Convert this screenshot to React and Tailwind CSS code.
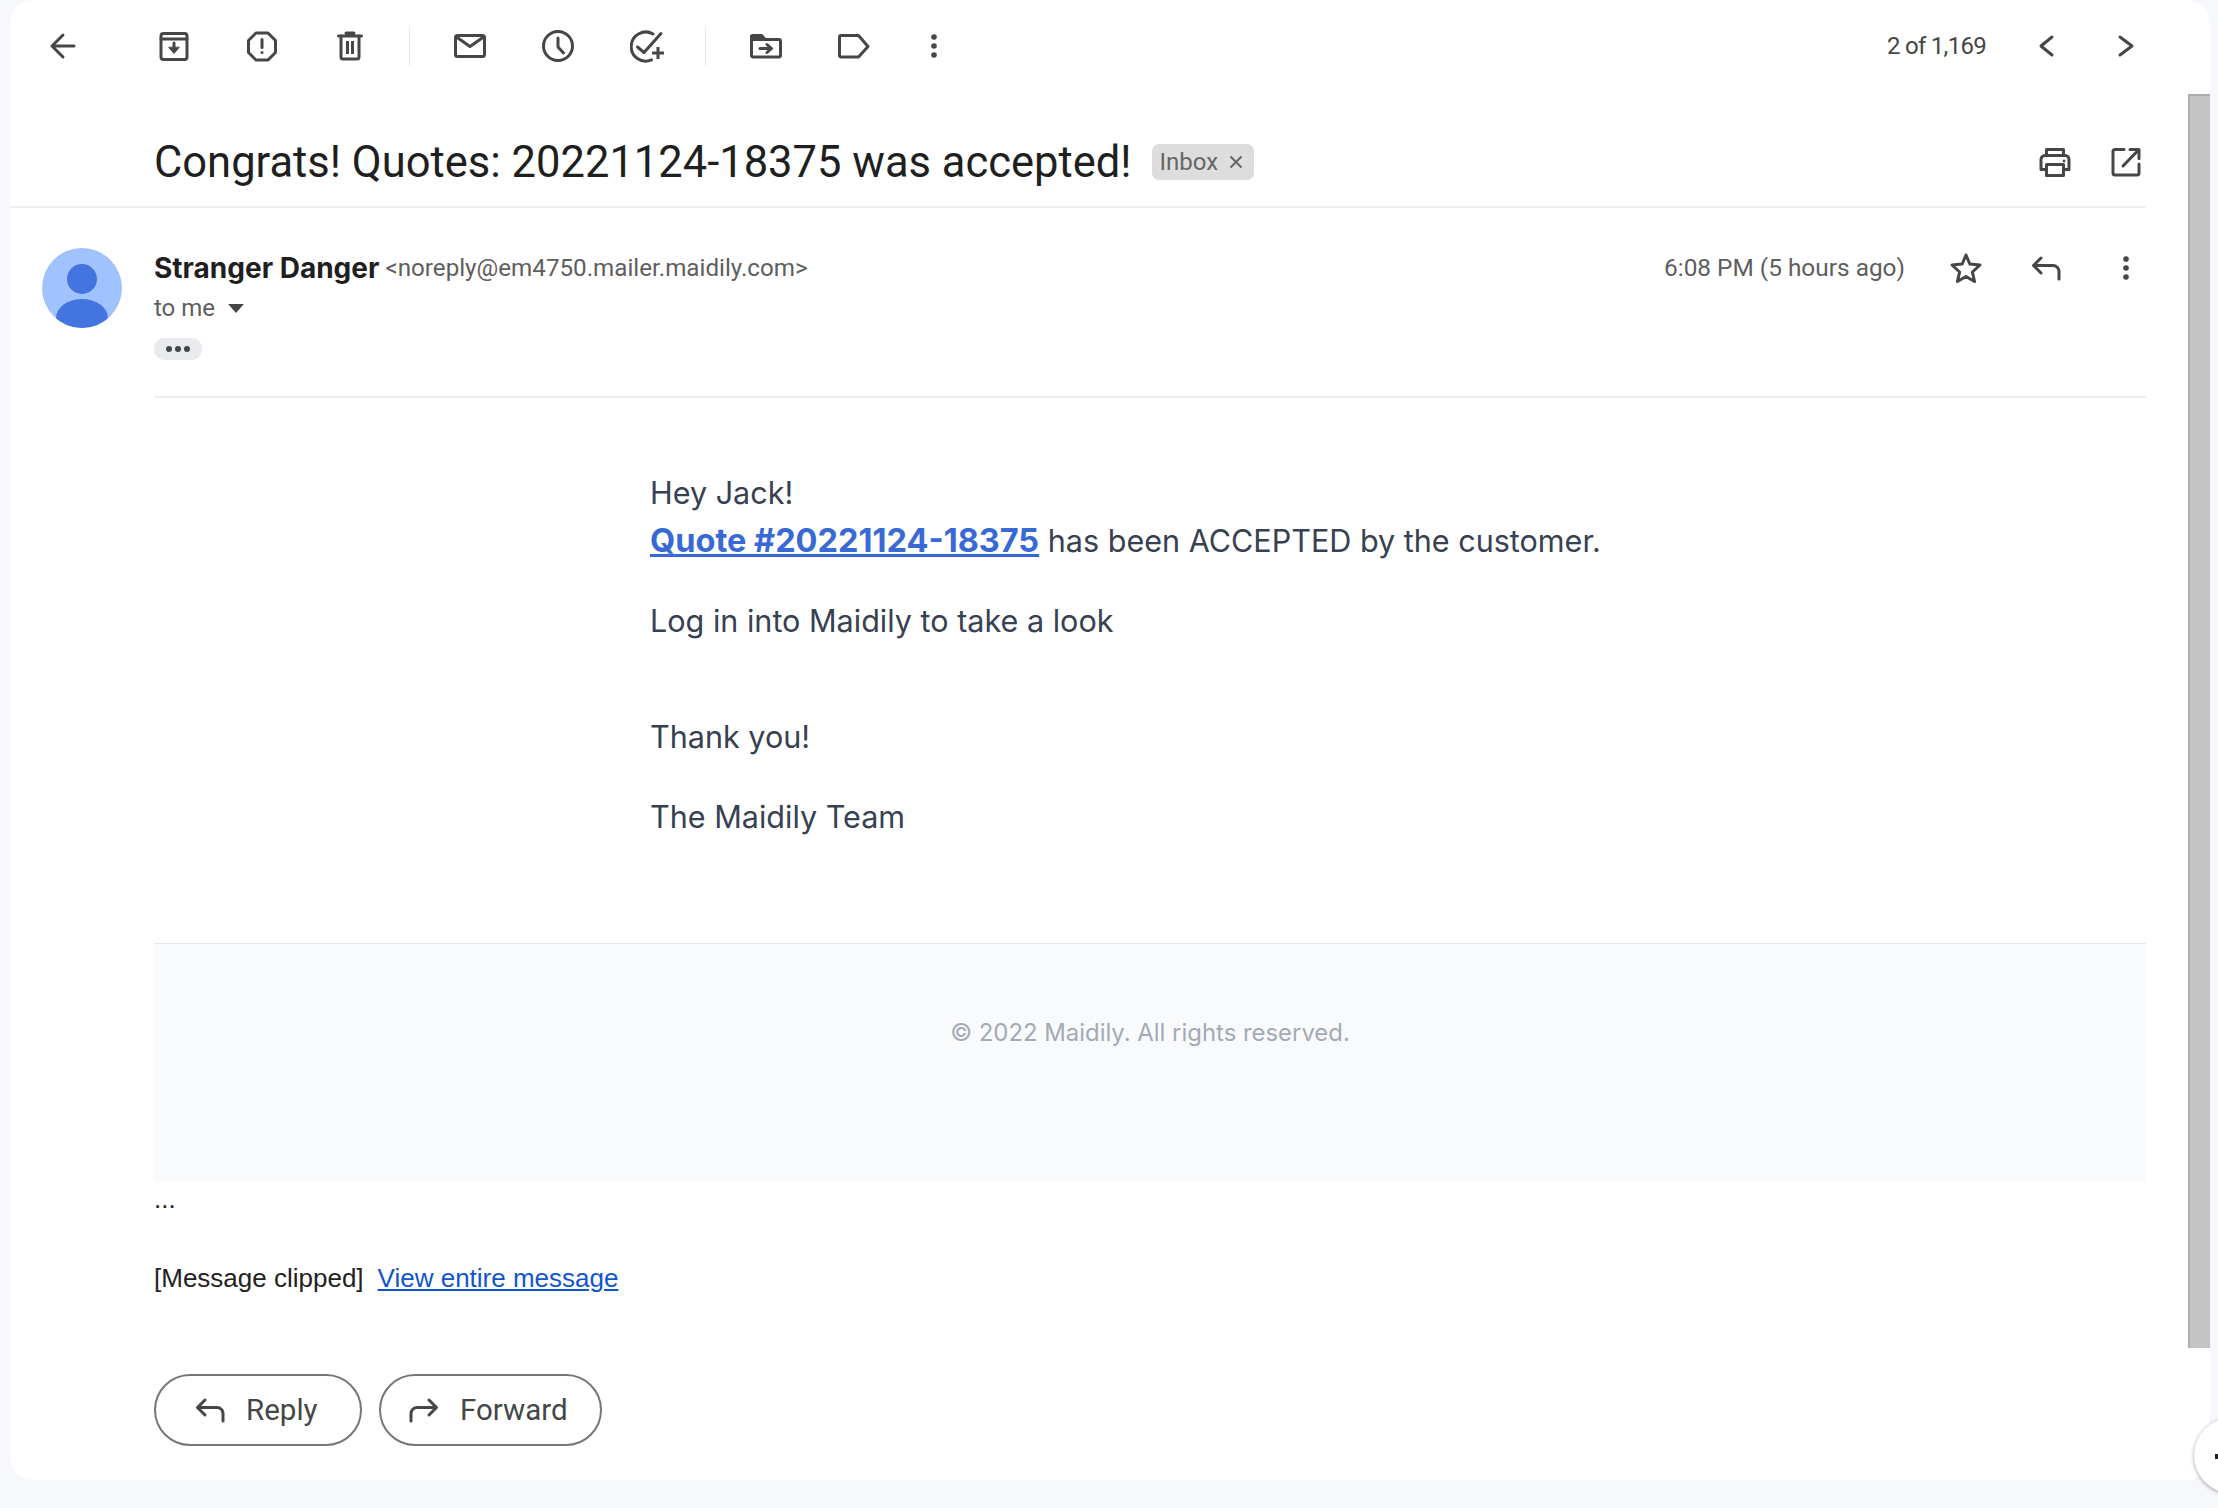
import React from 'react';

const Ico = ({ children, fill = 'none', className = '' }) => (
  <svg
    viewBox="0 0 34 34"
    fill={fill}
    stroke="#444746"
    strokeWidth="3"
    strokeLinecap="round"
    strokeLinejoin="round"
    className={`w-[34px] h-[34px] shrink-0 ${className}`}
  >
    {children}
  </svg>
);

const BackIcon = () => <Ico><path d="M6 17H28M17 6L6 17L17 28" /></Ico>;
const ArchiveIcon = () => (
  <Ico>
    <rect x="4" y="4.5" width="26" height="26" rx="2.5" />
    <path d="M4 10H30" />
    <path d="M17 14V21" />
    <path d="M12 18.5L17 24.5L22 18.5Z" fill="#444746" strokeWidth="1" />
  </Ico>
);
const ReportIcon = () => (
  <Ico>
    <path d="M11 4H23L30.5 11.5V23.5L23 31H11L3.5 23.5V11.5Z" />
    <path d="M17 10.5V18.5M17 23.5V23.6" />
  </Ico>
);
const TrashIcon = () => (
  <Ico>
    <path d="M5.5 7H28.5M13 4H21" />
    <path d="M8 7V28a2 2 0 0 0 2 2H24a2 2 0 0 0 2-2V7" />
    <path d="M14.5 12V25M19.5 12V25" strokeLinecap="butt" />
  </Ico>
);
const MailIcon = () => (
  <Ico>
    <rect x="2.5" y="6.5" width="29" height="21" rx="2" />
    <path d="M3.5 8L17 17.5L30.5 8" />
  </Ico>
);
const ClockIcon = () => (
  <Ico>
    <circle cx="17" cy="17" r="14.5" />
    <path d="M17 9V18L22.5 24" />
  </Ico>
);
const AddTaskIcon = ({ className }) => (
  <Ico className={className}>
    <path d="M23 5A14.5 14.5 0 1 0 21.5 30.8" />
    <path d="M7.5 18L14 23.5L31 4.5" />
    <path d="M28 18V30M22 24H34" strokeLinecap="butt" />
  </Ico>
);
const FolderMoveIcon = () => (
  <Ico>
    <path d="M2.5 7V26.5a1.5 1.5 0 0 0 1.5 1.5H30a1.5 1.5 0 0 0 1.5-1.5V12a1.5 1.5 0 0 0-1.5-1.5H16L12.5 6.5H3.5z" />
    <path d="M3 7H12L16 10.5H3Z" fill="#444746" />
    <path d="M11 19.5H22M18 15.5L22.5 19.5L18 23.5" />
  </Ico>
);
const LabelIcon = () => (
  <Ico>
    <path d="M4 6.5H21.5L31 17.5L21.5 28H4a1.5 1.5 0 0 1-1.5-1.5V8A1.5 1.5 0 0 1 4 6.5Z" />
  </Ico>
);
const MoreIcon = () => (
  <Ico fill="#444746">
    <circle cx="17" cy="8" r="2.8" stroke="none" />
    <circle cx="17" cy="17" r="2.8" stroke="none" />
    <circle cx="17" cy="26" r="2.8" stroke="none" />
  </Ico>
);
const ChevronLeft = () => <Ico><path d="M22 8L11 17L22 26" /></Ico>;
const ChevronRight = () => <Ico><path d="M11 8L23 17L11 26" /></Ico>;
const PrintIcon = () => (
  <Ico>
    <path d="M8.5 24.5H3V14.5a4 4 0 0 1 4-4H27a4 4 0 0 1 4 4V24.5H25.5" />
    <path d="M8.5 10.5V4.5H25.5V10.5" />
    <rect x="8.5" y="19.5" width="17" height="11" />
    <circle cx="26" cy="16" r="1.4" fill="#444746" stroke="none" />
  </Ico>
);
const OpenIcon = () => (
  <Ico>
    <path d="M15 4.5H6a2 2 0 0 0-2 2V28a2 2 0 0 0 2 2H28a2 2 0 0 0 2-2V19" />
    <path d="M21 4.5H30V13.5M29.5 5L14 21" />
  </Ico>
);
const StarIcon = () => (
  <Ico>
    <path d="M17 4L20.8 13L31 14L23.4 21L25.6 30.5L17 25.5L8.4 30.5L10.6 21L3 14L13.2 13Z" />
  </Ico>
);
const ReplyIcon = () => (
  <Ico><path d="M12 7L4.5 14.5L12 22M4.5 14.5H24a6 6 0 0 1 6 6V28" /></Ico>
);
const ForwardIcon = () => (
  <Ico><path d="M22 7L29.5 14.5L22 22M29.5 14.5H10a6 6 0 0 0-6 6V28" /></Ico>
);

const Avatar = () => (
  <svg viewBox="0 0 80 80" className="w-[80px] h-[80px] shrink-0">
    <defs>
      <clipPath id="avatar-clip">
        <circle cx="40" cy="40" r="40" />
      </clipPath>
    </defs>
    <g clipPath="url(#avatar-clip)">
      <rect width="80" height="80" fill="#a0c3ff" />
      <ellipse cx="40" cy="31" rx="15" ry="15" fill="#4374e0" />
      <ellipse cx="40" cy="70" rx="26" ry="19" fill="#4374e0" />
    </g>
  </svg>
);

export default function App() {
  return (
    <div className="relative w-[2218px] h-[1508px] overflow-hidden bg-[#f6f8fc] font-['Roboto',sans-serif]">
      <div className="ml-[10px] w-[2200px] h-[1480px] rounded-[24px] bg-white flex overflow-hidden">
        <div className="w-[2178px] flex flex-col">
          {/* toolbar */}
          <div className="h-[90px] flex items-center pt-[2px] pl-[36px] pr-[45px]">
            <BackIcon />
            <div className="ml-[77px] flex items-center gap-[54px]">
              <ArchiveIcon />
              <ReportIcon />
              <TrashIcon />
            </div>
            <div className="ml-[42px] w-[1px] h-[39px] bg-[#e3e6ea]" />
            <div className="ml-[43px] flex items-center gap-[54px]">
              <MailIcon />
              <ClockIcon />
              <AddTaskIcon className="ml-[1px]" />
            </div>
            <div className="ml-[41px] w-[1px] h-[39px] bg-[#e3e6ea]" />
            <div className="ml-[43px] flex items-center gap-[54px]">
              <FolderMoveIcon />
              <LabelIcon />
            </div>
            <div className="ml-[46px]"><MoreIcon /></div>
            <div className="ml-auto flex items-center">
              <span className="text-[24px] text-[#444746] tracking-[-0.7px]">2 of 1,169</span>
              <div className="ml-[44px] flex items-center gap-[45px]">
                <ChevronLeft />
                <ChevronRight />
              </div>
            </div>
          </div>

          {/* subject */}
          <div className="h-[118px] mr-[42px] pt-[28px] pl-[144px] pr-[3px] flex items-center border-b-2 border-[#ebeff3]">
            <h1 className="pt-[2px] text-[43.5px] leading-none font-normal text-[#1f1f1f]">Congrats! Quotes: 20221124-18375 was accepted!</h1>
            <span className="ml-[20px] h-[36px] w-[102px] rounded-[7px] bg-[#dddddd] flex items-center pl-[8px] text-[24px] text-[#666666]">
              Inbox
              <svg viewBox="0 0 14 14" stroke="#666666" strokeWidth="2" className="ml-[11px] w-[14px] h-[14px]">
                <path d="M1.5 1.5L12.5 12.5M12.5 1.5L1.5 12.5" />
              </svg>
            </span>
            <div className="ml-auto flex items-center gap-[37px]">
              <PrintIcon />
              <OpenIcon />
            </div>
          </div>

          {/* sender + message */}
          <div className="flex pl-[32px] pr-[42px] pt-[40px]">
            <Avatar />
            <div className="ml-[32px] flex-1 min-w-0">
              <div className="h-[150px] pt-[1px] border-b-2 border-[#ebeff3]">
                <div className="flex items-center h-[38px]">
                  <span className="font-['Inter',sans-serif] text-[28px] font-bold text-[#1f1f1f]">Stranger Danger</span>
                  <span className="ml-[6px] text-[24.2px] text-[#5e5e5e]">&lt;noreply@em4750.mailer.maidily.com&gt;</span>
                  <span className="ml-auto text-[24.4px] text-[#5e5e5e]">6:08 PM (5 hours ago)</span>
                  <div className="ml-[44px] mr-[3px] flex items-center gap-[46px]">
                    <StarIcon />
                    <ReplyIcon />
                    <MoreIcon />
                  </div>
                </div>
                <div className="mt-[2px] flex items-center h-[38px] text-[24px] text-[#5e5e5e]">
                  to me
                  <svg viewBox="0 0 14 8" className="ml-[13px] w-[16px] h-[9px]"><path d="M0 0H14L7 8Z" fill="#444746" /></svg>
                </div>
                <div className="mt-[11px] w-[48px] h-[22px] rounded-[10px] bg-[#e8eaed] flex items-center justify-center gap-[3px]">
                  <span className="w-[6px] h-[6px] rounded-full bg-[#444746]" />
                  <span className="w-[6px] h-[6px] rounded-full bg-[#444746]" />
                  <span className="w-[6px] h-[6px] rounded-full bg-[#444746]" />
                </div>
              </div>

              <div className="pt-[71px] pl-[496px] font-['Inter',sans-serif] text-[30.55px] leading-[48px] text-[#374151]">
                <p>Hey Jack!</p>
                <p>
                  <a className="font-bold text-[32.5px] text-[#3869d4] underline">Quote #20221124-18375</a> has been ACCEPTED by the customer.
                </p>
                <p className="mt-[32px]">Log in into Maidily to take a look</p>
                <p className="mt-[68px]">Thank you!</p>
                <p className="mt-[32px]">The Maidily Team</p>
              </div>

              <div className="mt-[102px] h-[238px] bg-[#f9fafb] border-t border-[#e8e5ef] pt-[72px] text-center font-['Inter',sans-serif] text-[23.9px] leading-[34px] text-[#a3aab5]">
                © 2022 Maidily. All rights reserved.
              </div>

              <div className="mt-[3px] font-['Liberation_Sans',sans-serif] text-[26px] leading-[30px] text-[#222222]">...</div>
              <div className="mt-[49px] font-['Liberation_Sans',sans-serif] text-[26px] leading-[30px] text-[#222222]">
                [Message clipped]
                <a className="ml-[14px] text-[#1155cc] underline">View entire message</a>
              </div>

              <div className="mt-[81px] flex gap-[17px]">
                <button className="h-[72px] w-[208px] rounded-full border-2 border-[#747775] flex items-center pl-[37px] text-[29.5px] font-[450] text-[#444746]">
                  <ReplyIcon />
                  <span className="ml-[19px]">Reply</span>
                </button>
                <button className="h-[72px] w-[223px] rounded-full border-2 border-[#747775] flex items-center pl-[26px] text-[29.5px] font-[450] text-[#444746]">
                  <ForwardIcon />
                  <span className="ml-[19px]">Forward</span>
                </button>
              </div>
            </div>
          </div>
        </div>

        {/* scrollbar */}
        <div className="w-[22px] pt-[94px]">
          <div className="h-[1254px] bg-[#c4c4c4] border-l-2 border-t-2 border-[#adadad]" />
        </div>
      </div>

      {/* side panel toggle */}
      <div className="absolute left-[2194px] top-[1418px] w-[75px] h-[75px] rounded-full bg-white shadow-[0_1px_4px_rgba(0,0,0,0.35)]">
        <span className="absolute left-[21px] top-[36px] w-[3px] h-[5px] bg-[#1f1f1f]" />
      </div>
    </div>
  );
}
